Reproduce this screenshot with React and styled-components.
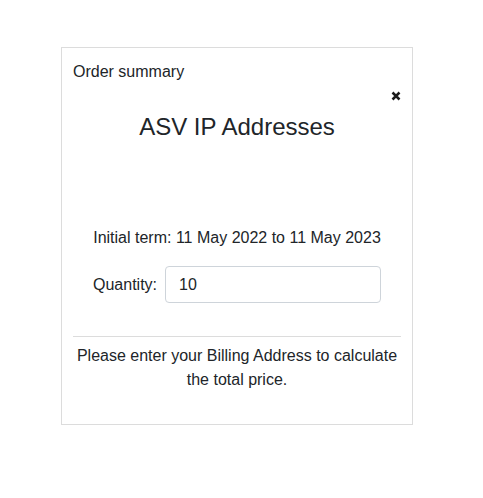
import React from "react";
import styled, { createGlobalStyle } from "styled-components";

const GlobalStyle = createGlobalStyle`
  body {
    margin: 0;
    background: #fff;
    font-family: "Liberation Sans", Arial, sans-serif;
    color: #212529;
  }
`;

const App = () => {
  return (
    <Page>
      <GlobalStyle />
      <Card>
        <Header>Order summary</Header>
        <CloseRow>
          <CloseButton aria-label="Close">
            <svg width="10" height="10" viewBox="0 0 10 10">
              <path d="M1.5 1.5 L8.5 8.5 M8.5 1.5 L1.5 8.5" stroke="#1a1a1a" strokeWidth="2.5" />
            </svg>
          </CloseButton>
        </CloseRow>
        <Title>ASV IP Addresses</Title>
        <Term>Initial term: 11 May 2022 to 11 May 2023</Term>
        <QuantityRow>
          <Label htmlFor="qty">Quantity:</Label>
          <QtyInput id="qty" defaultValue="10" />
        </QuantityRow>
        <Divider />
        <Note>Please enter your Billing Address to calculate the total price.</Note>
      </Card>
    </Page>
  );
};

export default App;

const Page = styled.div`
  padding: 47px 0 0 61px;
`;

const Card = styled.div`
  width: 352px;
  height: 378px;
  box-sizing: border-box;
  border: 1px solid #dcdcdc;
  padding: 12px 11px;
  display: flex;
  flex-direction: column;
`;

const Header = styled.div`
  font-size: 16px;
  line-height: 24px;
`;

const CloseRow = styled.div`
  display: flex;
  justify-content: flex-end;
  margin-top: 7px;
`;

const CloseButton = styled.button`
  border: none;
  background: none;
  padding: 0;
  width: 10px;
  height: 10px;
  display: flex;
  align-items: center;
  justify-content: center;
  cursor: pointer;
`;

const Title = styled.div`
  text-align: center;
  font-size: 24px;
  line-height: 30px;
  margin-top: 11px;
`;

const Term = styled.div`
  text-align: center;
  font-size: 16px;
  line-height: 22px;
  margin-top: 85px;
`;

const QuantityRow = styled.div`
  display: flex;
  align-items: center;
  justify-content: center;
  gap: 8px;
  margin-top: 17px;
`;

const Label = styled.label`
  font-size: 16px;
`;

const QtyInput = styled.input`
  width: 216px;
  height: 37px;
  box-sizing: border-box;
  border: 1px solid #ced4da;
  border-radius: 4px;
  padding: 0 13px;
  font-size: 16px;
  font-family: "Liberation Sans", Arial, sans-serif;
  color: #212529;
`;

const Divider = styled.hr`
  border: none;
  border-top: 1px solid #dcdcdc;
  margin: 33px 0 0;
`;

const Note = styled.div`
  text-align: center;
  font-size: 16px;
  line-height: 24px;
  margin-top: 7px;
`;
